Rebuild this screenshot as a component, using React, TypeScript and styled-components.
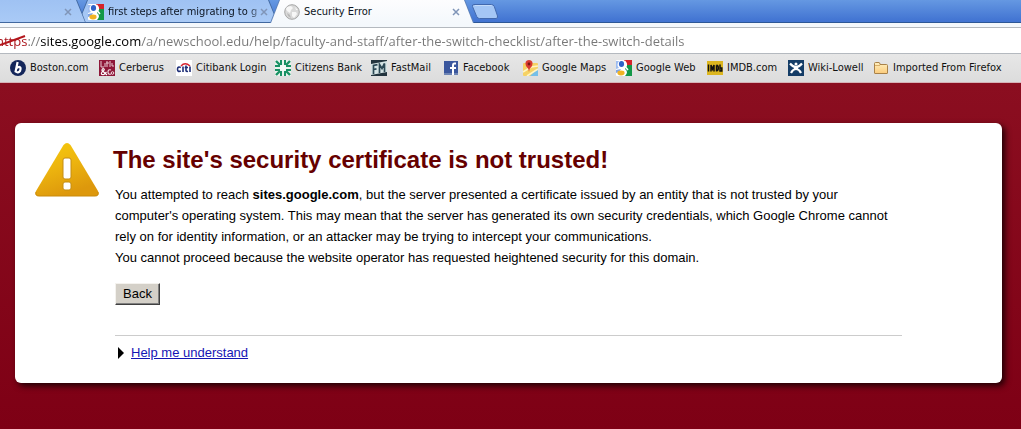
import React from 'react';
import styled, { createGlobalStyle, css } from 'styled-components';

const uiFont = '"DejaVu Sans Condensed", Tahoma, sans-serif';

const GlobalStyle = createGlobalStyle`
  *, *::before, *::after { box-sizing: border-box; }
  body { margin: 0; font-family: "Liberation Sans", Arial, sans-serif; }
`;

const Browser = styled.div`
  display: flex;
  flex-direction: column;
  min-height: 100vh;
`;

/* ---------- tab strip ---------- */

const TabStrip = styled.div`
  display: flex;
  height: 23px;
  overflow: hidden;
  background: linear-gradient(#6598e2, #4274d2 90%);
  box-shadow: inset 0 -1px #2d5796;
`;

const Tab = styled.div<{ $width: number; $active?: boolean }>`
  position: relative;
  z-index: ${p => (p.$active ? 2 : 1)};
  flex: 0 0 ${p => p.$width}px;
  min-width: 0;
  display: flex;
  align-items: center;
  height: 23px;
  padding: 0 10px;
  margin-right: -8px;
  isolation: isolate;

  &::before, &::after {
    content: '';
    position: absolute;
    z-index: -1;
    clip-path: polygon(9px 0, calc(100% - 9px) 0, 100% 100%, 0 100%);
  }
  &::before { inset: 0; background: #41689f; }
  &::after {
    inset: 0 1px;
    background: linear-gradient(#9fc2f3, #a9caf6);
    bottom: 1px;
  }
  &:first-child {
    z-index: 2;
    margin-left: -10px;
    padding-right: 14px;
  }
  ${p => p.$active && css`
    padding: 0 14px;
    &::before { background: #5d81b8; }
    &::after { bottom: 0; background: linear-gradient(#fdfdfe, #f4f8fc); }
  `}
`;

const TabButton = styled.button<{ $fade?: boolean }>`
  flex: 1;
  min-width: 0;
  display: flex;
  align-items: center;
  gap: 4px;
  padding: 0;
  border: 0;
  background: none;
  color: #0c1420;
  font: 11px/16px ${uiFont};
  text-align: left;

  svg { flex: none; }
  span {
    flex: 1;
    overflow: hidden;
    white-space: nowrap;
    ${p => p.$fade && css`mask-image: linear-gradient(to right, #000 92%, #0004);`}
  }
`;

const CloseButton = styled.button`
  flex: none;
  display: flex;
  padding: 0;
  border: 0;
  background: none;
  color: #8095b8;
`;

const NewTabButton = styled.button`
  display: flex;
  align-items: center;
  height: 22px;
  margin-left: 5px;
  padding: 0;
  border: 0;
  background: none;
`;

/* ---------- address bar ---------- */

const AddressBar = styled.div`
  position: relative;
  height: 31px;
  padding-top: 4px;
  overflow: hidden;
  background: #f4f8fc;

  svg { position: absolute; left: 0; top: 12px; }
`;

const AddressInput = styled.input`
  display: block;
  width: calc(100% + 4px);
  height: 27px;
  margin-left: -4px;
  padding: 0;
  border: solid #b4b9bf;
  border-width: 1px 0;
  border-radius: 0;
  outline: 0;
  font: 13px/25px "Open Sans", Tahoma, sans-serif;
  color: transparent;
  background:
    linear-gradient(to right, #a80f16 31px, #777 31px 44px, #000 44px 145px, #777 145px) text,
    #fff;
`;

/* ---------- bookmarks ---------- */

const BookmarksBar = styled.nav`
  display: flex;
  align-items: center;
  height: 29px;
  padding-left: 10px;
  overflow: hidden;
  background: linear-gradient(#e7e7e7, #dcdcdc);
  border-bottom: 1px solid #d7b3b8;
`;

const Bookmark = styled.a<{ $width: number }>`
  flex: 0 0 ${p => p.$width}px;
  display: flex;
  align-items: center;
  gap: 4px;
  color: #111;
  font: 11px/16px ${uiFont};
  text-decoration: none;
  white-space: nowrap;

  svg { flex: none; }
`;

/* ---------- page ---------- */

const Page = styled.main`
  flex: 1;
  padding: 40px 19px 40px 15px;
  background: linear-gradient(#8b0e20, #7e0015);
`;

const Card = styled.section`
  display: flex;
  align-items: flex-start;
  gap: 15px;
  padding: 20px 100px 20px 20px;
  border-radius: 6px;
  background: #fff;
  box-shadow: 3px 3px 6px #200005;

  > svg { flex: none; }
`;

const Content = styled.div`
  flex: 1;
  padding-left: 1px;
  color: #000;
  font-size: 13px;
  line-height: 21px;
`;

const Title = styled.h1`
  margin: 0 0 7px -2px;
  color: #660000;
  font-size: 24px;
  line-height: 34px;
`;

const Paragraph = styled.p`
  margin: 0;
`;

const BackButton = styled.button`
  display: block;
  height: 22px;
  margin: 15px 0 30px;
  padding: 0 7px;
  border: 1px solid;
  border-color: #f4f2ee #404040 #404040 #f4f2ee;
  border-radius: 0;
  background: #d4d0c8;
  box-shadow: inset -1px -1px #808080;
  color: #000;
  font: 13px/18px "Liberation Sans", Arial, sans-serif;
`;

const HelpRow = styled.div`
  display: flex;
  align-items: center;
  gap: 6px;
  padding: 6px 0 0 3px;
  border-top: 1px solid #ccc;
`;

const HelpLink = styled.a`
  color: #1414b4;
  text-decoration: underline;
`;

/* ---------- drawings ---------- */

const Icon = ({ children }: { children: React.ReactNode }) => (
  <svg width="16" height="16" viewBox="0 0 16 16" aria-hidden="true">{children}</svg>
);

const GoogleIcon = () => (
  <Icon>
    <rect width="16" height="16" rx="1" fill="#fff" />
    <path d="M8 0h8v5H11z" fill="#d5232b" />
    <path d="M11 5h5v11H9q4-4 0-7z" fill="#139847" />
    <path d="M0 1h3Q0 5 3 8L0 9z" fill="#9dbcf0" />
    <ellipse cx="5.500" cy="4" rx="2.600" ry="3" fill="#2f62c8" />
    <path d="M0 10l5-1-2 3-3 1z" fill="#7fa5e6" />
    <ellipse cx="5" cy="13" rx="3.600" ry="2.400" fill="#f0b323" />
    <path d="M8.500 1q3 3 1 6l2.500 3" stroke="#fff" strokeWidth="1.600" fill="none" />
  </Icon>
);

const GlobeIcon = () => (
  <Icon>
    <circle cx="8" cy="8" r="7.300" fill="#d9d9d9" stroke="#a6a6a6" />
    <path d="M3 3l4-1 2 2-2 2-1 3-3-2-1-2zM8 8l4 0 1 2-3 4-2-2zM11 3l3 3-2 0z" fill="#f7f7f7" />
    <path d="M3 9l3 2 1 3-3-2z" fill="#b9b9b9" />
  </Icon>
);

const BostonIcon = () => (
  <Icon>
    <circle cx="8" cy="8" r="8" fill="#14265a" />
    <path d="M7.600 2L5.600 11.500Q8 13.500 10 11Q11.500 7.200 9.200 6.900Q7.400 6.900 6.300 8.600" fill="none" stroke="#fff" strokeWidth="2.200" />
  </Icon>
);

const CerberusIcon = () => (
  <Icon>
    <rect width="16" height="16" fill="#8e1738" />
    <path d="M2 1v6h3M6 3v4M8 1v6M7 3h3M11 1v6M13 3v3h2" stroke="#e9c9d1" fill="none" />
    <path d="M8 15L3 10.500Q3 8 5 9Q6 10 3 12Q1 15 5 14.500L7.500 12" stroke="#fff" strokeWidth="1.200" fill="none" />
    <path d="M12 10Q9 9 9 12Q9 15 12 14" stroke="#f4dfe4" strokeWidth="1.200" fill="none" />
    <circle cx="13.500" cy="13" r="1.300" stroke="#f4dfe4" fill="none" />
  </Icon>
);

const CitiIcon = () => (
  <Icon>
    <rect width="16" height="16" fill="#fff" />
    <path d="M5 6Q9 1.500 14 6" stroke="#d8232f" strokeWidth="1.400" fill="none" />
    <path d="M4.800 7.500Q1.500 6 1.500 9.300Q1.500 12.300 4.800 11M7 6.500V12M10 5.500V10.500Q10 11.800 12 11.300M8.700 7.500H12M14 6.500V12" stroke="#1f2f78" strokeWidth="1.600" fill="none" />
  </Icon>
);

const CitizensIcon = () => (
  <Icon>
    <rect width="16" height="16" fill="#e9f3ee" />
    <g stroke="#199164" strokeWidth="2" fill="none">
      <path d="M6 0v5M10 0v5M6 11v5M10 11v5M0 6h5M0 10h5M11 6h5M11 10h5" />
      <path d="M1 1l4 4M15 1l-4 4M1 15l4-4M15 15l-4-4" strokeWidth="2.400" />
    </g>
    <circle cx="8" cy="8" r="3" fill="#f4faf7" />
  </Icon>
);

const FastMailIcon = () => (
  <Icon>
    <rect width="16" height="16" fill="#22343e" />
    <path d="M0 4L16 1v11L0 15z" fill="#d4e3e4" />
    <path d="M2.500 14V5.500l4-.8M2.500 9.500l3-.6M8.500 13V4.500l2.500 4 2.500-5V12" stroke="#2b4855" strokeWidth="1.700" fill="none" />
  </Icon>
);

const FacebookIcon = () => (
  <Icon>
    <rect x="1" y="1" width="14" height="14" fill="#3b579d" />
    <path d="M1 13h14v2H1z" fill="#6d84b4" />
    <path d="M13 3.500H11.500Q10 3.500 10 5.500V15M7 8h6" stroke="#fff" strokeWidth="2" fill="none" />
  </Icon>
);

const MapsIcon = () => (
  <Icon>
    <rect x="1" y="3" width="15" height="13" rx="1" fill="#f6d264" />
    <path d="M16 8v8H8z" fill="#76bfe8" />
    <path d="M1 12L9 7l7-1M5 16L16 9" stroke="#fff4c4" strokeWidth="1.500" fill="none" />
    <path d="M7 12Q6.500 8 4 6Q2 .5 7 0Q12 .5 10 6Q7.500 8 7 12z" fill="#d93a31" />
    <circle cx="7" cy="4" r="1.400" fill="#7d1414" />
  </Icon>
);

const ImdbIcon = () => (
  <Icon>
    <rect y="1" width="16" height="14" fill="#dcb61f" />
    <path d="M1.500 4.500v7M4 11.500V5l1.500 4L7 5v6.500M9.500 5.300v5.400Q11.300 11 11.300 8T9.500 5.300M13 4.500v6.500h1.800V8H13" stroke="#111" strokeWidth="1.500" fill="none" />
  </Icon>
);

const WikiIcon = () => (
  <Icon>
    <rect width="16" height="16" fill="#143c66" />
    <path d="M2 3.500Q5 7 8 7Q11 7 14 3.500M3 13Q5 9 8 9Q11 9 13 13" stroke="#fff" strokeWidth="2.200" fill="none" />
    <path d="M6 6h4v4H6z" fill="#fff" />
    <circle cx="8" cy="4" r="1.500" fill="#fff" />
  </Icon>
);

const FolderIcon = () => (
  <Icon>
    <defs>
      <linearGradient id="folder" x2="0" y2="1">
        <stop stopColor="#fff0c0" />
        <stop offset="1" stopColor="#fbcb7b" />
      </linearGradient>
    </defs>
    <path d="M1.500 13V3.500Q1.500 2.500 2.500 2.500H6Q7 2.500 7 4.500H13.500Q14.500 4.500 14.500 5.500V13Q14.500 13.500 14 13.500H2Q1.500 13.500 1.500 13z" fill="url(#folder)" stroke="#a98249" />
    <path d="M2 5.500H7" stroke="#d9b06b" />
  </Icon>
);

const CloseIcon = () => (
  <svg width="8" height="8" viewBox="0 0 8 8" aria-hidden="true">
    <path d="M1 1l6 6M7 1l-6 6" stroke="currentColor" strokeWidth="1.500" />
  </svg>
);

const NewTabIcon = () => (
  <svg width="28" height="17" viewBox="0 0 28 17" aria-hidden="true">
    <path d="M3 1.500H20.500Q22.500 1.500 23.300 3.500L26.500 13Q27 15.500 25 15.500H8.500Q6.500 15.500 5.700 13.500L1.500 3.500Q1 1.500 3 1.500z" fill="#a4c6f5" stroke="#4269ae" />
    <path d="M4 2.500H20.500" stroke="#c4dbf9" />
  </svg>
);

const WarningIcon = () => (
  <svg width="64" height="54" viewBox="0 0 64 54" role="img" aria-label="Warning">
    <defs>
      <linearGradient id="warning" x1="0" y1="0" x2=".4" y2="1">
        <stop stopColor="#f6cb0c" />
        <stop offset=".5" stopColor="#edb50f" />
        <stop offset="1" stopColor="#dd980c" />
      </linearGradient>
    </defs>
    <path d="M28.500 2Q32 -2 35.500 2L63 48Q65 53 60 53H4Q-1 53 1 48z" fill="url(#warning)" />
    <path d="M1 49Q0 53 4 53H60Q64 53 63 49" stroke="#c98a0b" fill="none" />
    <rect x="28" y="15" width="8" height="21" rx="2" fill="#fff" stroke="#c58d12" />
    <rect x="28" y="39" width="8" height="8" rx="2" fill="#fff" stroke="#c58d12" />
  </svg>
);

const ArrowIcon = () => (
  <svg width="7" height="12" viewBox="0 0 7 12" aria-hidden="true">
    <path d="M0 0l6 6-6 6z" fill="#000" />
  </svg>
);

const bookmarks = [
  { label: 'Boston.com', width: 89, Glyph: BostonIcon },
  { label: 'Cerberus', width: 77, Glyph: CerberusIcon },
  { label: 'Citibank Login', width: 99, Glyph: CitiIcon },
  { label: 'Citizens Bank', width: 96, Glyph: CitizensIcon },
  { label: 'FastMail', width: 72, Glyph: FastMailIcon },
  { label: 'Facebook', width: 79, Glyph: FacebookIcon },
  { label: 'Google Maps', width: 94, Glyph: MapsIcon },
  { label: 'Google Web', width: 91, Glyph: GoogleIcon },
  { label: 'IMDB.com', width: 81, Glyph: ImdbIcon },
  { label: 'Wiki-Lowell', width: 85, Glyph: WikiIcon },
  { label: 'Imported From Firefox', width: 140, Glyph: FolderIcon },
];

export default function App() {
  return (
    <Browser>
      <GlobalStyle />
      <TabStrip>
        <Tab $width={96}>
          <TabButton aria-label="Background tab"><span /></TabButton>
          <CloseButton aria-label="Close tab"><CloseIcon /></CloseButton>
        </Tab>
        <Tab $width={200}>
          <TabButton $fade>
            <GoogleIcon />
            <span>first steps after migrating to g</span>
          </TabButton>
          <CloseButton aria-label="Close tab"><CloseIcon /></CloseButton>
        </Tab>
        <Tab $width={204} $active>
          <TabButton>
            <GlobeIcon />
            <span>Security Error</span>
          </TabButton>
          <CloseButton aria-label="Close tab"><CloseIcon /></CloseButton>
        </Tab>
        <NewTabButton aria-label="New tab"><NewTabIcon /></NewTabButton>
      </TabStrip>

      <AddressBar>
        <AddressInput
          aria-label="Address"
          defaultValue="https://sites.google.com/a/newschool.edu/help/faculty-and-staff/after-the-switch-checklist/after-the-switch-details"
        />
        <svg width="26" height="12" viewBox="0 0 26 12" aria-hidden="true">
          <path d="M0 10L25 1" stroke="#b3161c" strokeWidth="2" />
        </svg>
      </AddressBar>

      <BookmarksBar aria-label="Bookmarks">
        {bookmarks.map(({ label, width, Glyph }) => (
          <Bookmark key={label} href="#" $width={width}>
            <Glyph />
            {label}
          </Bookmark>
        ))}
      </BookmarksBar>

      <Page>
        <Card>
          <WarningIcon />
          <Content>
            <Title>The site's security certificate is not trusted!</Title>
            <Paragraph>
              You attempted to reach <strong>sites.google.com</strong>, but the server presented a
              certificate issued by an entity that is not trusted by your computer's operating
              system. This may mean that the server has generated its own security credentials,
              which Google Chrome cannot rely on for identity information, or an attacker may be
              trying to intercept your communications.
            </Paragraph>
            <Paragraph>
              You cannot proceed because the website operator has requested heightened security for
              this domain.
            </Paragraph>
            <BackButton type="button">Back</BackButton>
            <HelpRow>
              <ArrowIcon />
              <HelpLink href="#">Help me understand</HelpLink>
            </HelpRow>
          </Content>
        </Card>
      </Page>
    </Browser>
  );
}
